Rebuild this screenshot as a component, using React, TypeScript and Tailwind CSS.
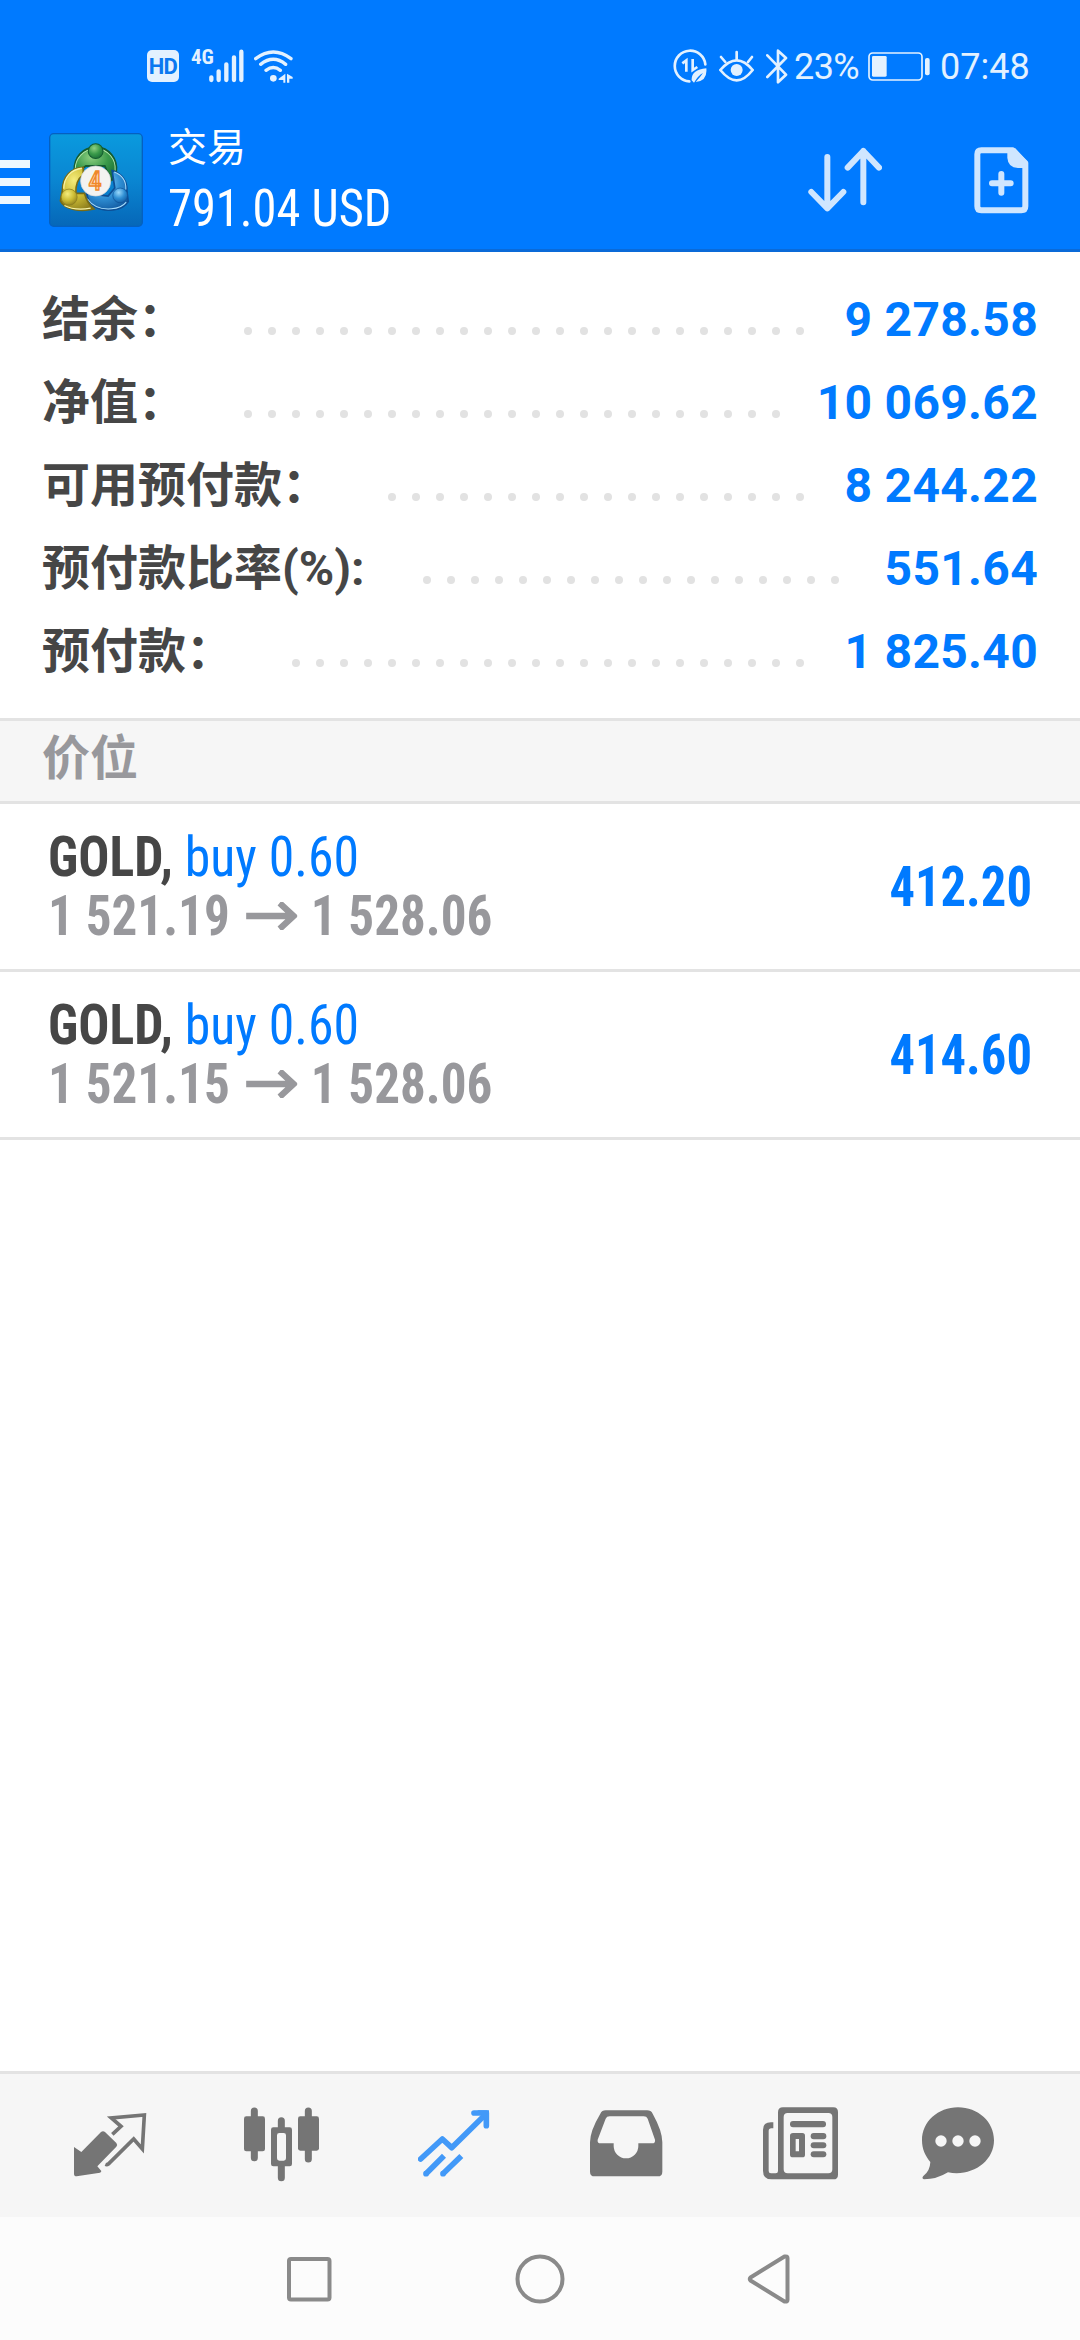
import type { ReactNode } from "react";

type SummaryRow = {
  label: string;
  value: string;
  dots: number;
};

type Position = {
  id: number;
  symbol: string;
  side: string;
  volume: string;
  open: string;
  current: string;
  profit: string;
};

const summary: SummaryRow[] = [
  { label: "结余：", value: "9 278.58", dots: 24 },
  { label: "净值：", value: "10 069.62", dots: 23 },
  { label: "可用预付款：", value: "8 244.22", dots: 18 },
  { label: "预付款比率(%):", value: "551.64", dots: 18 },
  { label: "预付款：", value: "1 825.40", dots: 22 },
];

const positions: Position[] = [
  { id: 1, symbol: "GOLD,", side: "buy", volume: "0.60", open: "1 521.19", current: "1 528.06", profit: "412.20" },
  { id: 2, symbol: "GOLD,", side: "buy", volume: "0.60", open: "1 521.15", current: "1 528.06", profit: "414.60" },
];

function StatusBar() {
  return (
    <div className="flex h-[111px] items-center pt-[21px] pl-[147px] pr-[51px] text-[#e3f1ff]">
      <div className="flex size-8 items-center justify-center rounded-[5px] bg-[#e3f1ff] text-[22px] font-bold tracking-tight text-[#0a78f0]">
        HD
      </div>
      <span className="ml-3 -mt-[17px] w-[18px] text-[21px] font-bold leading-none [font-stretch:75%]">4G</span>
      <svg className="h-[34px] w-[35px]" viewBox="238 56 105 102" stroke="currentColor" strokeWidth="13" strokeLinecap="round">
        <path d="M245 141v8M267 123v26M290 102v47M313 81v68M335 64v85" />
      </svg>
      <svg className="ml-[10px] h-[34px] w-10" viewBox="372 56 120 102" fill="none" stroke="currentColor" strokeWidth="10" strokeLinecap="round">
        <path d="M377 85Q430 45 483 85M392 102Q430 72 467 102M408 120Q430 103 451 120" />
        <circle cx="430" cy="144" r="10" fill="currentColor" stroke="none" />
        <path d="M466 130v27h-6v-8h-14v-4zM471 130l17 10v5h-10v12h-7z" fill="currentColor" stroke="none" />
      </svg>
      <div className="ml-auto flex items-center text-[36px] leading-none">
        <svg className="h-[34px] w-[34px]" viewBox="37 58 102 102" fill="none" stroke="currentColor" strokeWidth="8">
          <path d="M86 155A46 46 0 1 1 134 104" strokeLinecap="round" />
          <path d="M65 101l12-9v34M96 88v33l14-9" />
          <path d="M93 152q-2-31 44-36q4 38-32 41q14-15 22-27q-15 8-27 29z" fill="currentColor" stroke="none" />
        </svg>
        <svg className="ml-3 h-[34px] w-[35px]" viewBox="175 58 105 102" fill="none" stroke="currentColor" strokeWidth="8" strokeLinecap="round">
          <path d="M179 121Q204 92 228 92T276 121Q252 152 228 152T179 121z" />
          <path d="M228 67v22M181 82l13 15M274 82l-12 15" />
          <circle cx="228" cy="121" r="18" fill="currentColor" stroke="none" />
        </svg>
        <svg className="ml-3 h-[35px] w-[22px]" viewBox="317 57 66 105" fill="none" stroke="currentColor" strokeWidth="8" strokeLinejoin="round" strokeLinecap="round">
          <path d="M321 76l56 58l-24 23V62l24 22l-56 57" />
        </svg>
        <span className="mt-[2px] ml-[6px] w-[66px] tracking-[-0.6px]">23%</span>
        <svg className="ml-2 h-[29px] w-[62px]" viewBox="625 66 186 87" fill="none" stroke="currentColor" strokeWidth="5">
          <rect x="628" y="69" width="159" height="81" rx="11" />
          <rect x="637" y="78" width="44" height="62" rx="4" fill="currentColor" stroke="none" />
          <rect x="796" y="84" width="14" height="52" rx="6" fill="currentColor" stroke="none" />
        </svg>
        <span className="mt-[2px] ml-[10px] w-[89px]">07:48</span>
      </div>
    </div>
  );
}

function AppLogo() {
  return (
    <svg className="size-[94px]" viewBox="10 10 280 280" fill="none">
      <defs>
        <linearGradient id="logo-bg" x1="0" y1="0" x2="0" y2="1">
          <stop offset="0" stopColor="#0a9ade" />
          <stop offset="0.5" stopColor="#0a86d2" />
          <stop offset="1" stopColor="#0667b8" />
        </linearGradient>
        <radialGradient id="logo-green" cx="0.4" cy="0.3" r="0.8">
          <stop offset="0" stopColor="#8fd082" />
          <stop offset="0.5" stopColor="#3a9a4a" />
          <stop offset="1" stopColor="#146834" />
        </radialGradient>
        <radialGradient id="logo-yellow" cx="0.4" cy="0.3" r="0.8">
          <stop offset="0" stopColor="#f5ec7c" />
          <stop offset="0.5" stopColor="#cdbd35" />
          <stop offset="1" stopColor="#85761a" />
        </radialGradient>
        <radialGradient id="logo-blue" cx="0.4" cy="0.3" r="0.8">
          <stop offset="0" stopColor="#9ad8fb" />
          <stop offset="0.5" stopColor="#2f8fd4" />
          <stop offset="1" stopColor="#0d5198" />
        </radialGradient>
      </defs>
      <rect x="12" y="12" width="276" height="276" rx="12" fill="url(#logo-bg)" stroke="#0560c0" strokeWidth="4" />
      <path d="M86 122C84 84 108 54 150 52C190 54 214 88 210 124Q208 146 194 152L176 108H120L100 122z" fill="url(#logo-green)" stroke="#145c30" strokeWidth="6" />
      <path d="M88 118C88 86 112 58 150 56C186 58 210 88 207 122" stroke="#b4e6aa" strokeWidth="3" />
      <path d="M198 122C226 130 244 152 242 184L246 214C228 244 176 246 146 230Q126 216 122 190L186 198L206 174z" fill="url(#logo-blue)" stroke="#0d4f96" strokeWidth="5" />
      <path d="M204 126C226 134 240 152 239 178M124 206Q148 240 196 236Q226 234 240 216" stroke="#a9defc" strokeWidth="3" />
      <path d="M112 112C74 114 50 142 50 180L44 212C56 238 104 246 144 236Q124 220 116 190H90Q88 152 112 134z" fill="url(#logo-yellow)" stroke="#7a6c14" strokeWidth="5" />
      <path d="M108 115C76 118 54 142 54 176M56 226Q86 242 134 234" stroke="#f8f3a6" strokeWidth="4" />
      <circle cx="149" cy="64" r="22" fill="url(#logo-green)" stroke="#145c30" strokeWidth="3" />
      <circle cx="70" cy="201" r="24" fill="url(#logo-yellow)" stroke="#85781c" strokeWidth="2" />
      <circle cx="222" cy="196" r="22" fill="url(#logo-blue)" stroke="#0d4f96" strokeWidth="2" />
      <circle cx="149" cy="153" r="45" fill="#f3f3f1" stroke="#cfd4d6" strokeWidth="2" />
      <text x="147" y="180" textAnchor="middle" className="text-[78px] font-medium [font-stretch:85%]" fill="#fcd9ae" stroke="#f0872a" strokeWidth="4">
        4
      </text>
    </svg>
  );
}

function Header() {
  return (
    <header className="flex h-[252px] flex-col border-b-[3px] border-[#0a6ad8] bg-[#007aff]">
      <StatusBar />
      <div className="flex flex-1 items-center pr-[51px]">
        <div className="mt-1 flex w-[30px] flex-col gap-[10px]">
          <span className="h-2 bg-[#eef8ff]" />
          <span className="h-2 bg-[#eef8ff]" />
          <span className="h-2 bg-[#eef8ff]" />
        </div>
        <div className="ml-[19px]">
          <AppLogo />
        </div>
        <div className="ml-[25px] flex flex-col self-start pt-[14px] text-white">
          <span className="text-[39px] leading-[47px]">交易</span>
          <span className="origin-left scale-x-[0.95] text-[51px] leading-[73px] whitespace-nowrap [font-stretch:75%]">791.04 USD</span>
        </div>
        <svg className="ml-auto h-[66px] w-[74px]" viewBox="86 80 222 198" fill="none" stroke="#cfe6ff" strokeWidth="18" strokeLinecap="round" strokeLinejoin="round">
          <path d="M144 110v154M96 215l48 49l48-49M252 246V92M205 142l47-50l47 50" />
        </svg>
        <svg className="ml-[92px] h-[67px] w-[55px]" viewBox="584 80 165 201" fill="none" stroke="#cfe6ff" strokeWidth="18">
          <path d="M606 90H700L738 128V258Q738 270 726 270H606Q594 270 594 258V102Q594 90 606 90z" strokeLinejoin="round" />
          <path d="M684 90V112Q686 142 716 143H746V126L708 84z" fill="#cfe6ff" stroke="none" />
          <path d="M666 161v56M638 189h56" strokeLinecap="round" />
        </svg>
      </div>
    </header>
  );
}

function Leader({ count }: { count: number }) {
  return (
    <div className="ml-[58px] flex gap-4 pt-[23px]">
      {Array.from({ length: count }, (_, i) => (
        <span key={i} className="size-2 rounded-full bg-[#e2e2e2]" />
      ))}
    </div>
  );
}

function Summary() {
  return (
    <section className="border-b-[3px] border-[#e3e3e3] pt-[26px] pr-[42px] pb-[25px] pl-[42px]">
      {summary.map((row) => (
        <div key={row.label} className="flex h-[83px] items-center text-[48px] leading-[83px] font-bold">
          <span className="whitespace-nowrap text-[#464646]">{row.label}</span>
          <Leader count={row.dots} />
          <span className="ml-auto tracking-[0.3px] whitespace-nowrap text-[#007aff]">{row.value}</span>
        </div>
      ))}
    </section>
  );
}

function PositionRow({ item }: { item: Position }) {
  return (
    <li className="flex h-[168px] items-center justify-between border-b-[3px] border-[#e3e3e3] pr-12 pl-12 text-[55px] leading-[59px] [font-stretch:75%]">
      <div>
        <div className="flex origin-left scale-x-[0.94] whitespace-pre">
          <span className="font-bold text-[#464646]">{item.symbol}</span>
          <span className="text-[#007aff]">
            {" "}
            {item.side} {item.volume}
          </span>
        </div>
        <div className="flex origin-left scale-x-[0.93] items-center font-bold whitespace-nowrap text-[#98989c]">
          <span>{item.open}</span>
          <svg className="mr-[14px] ml-[18px] h-7 w-[55px]" viewBox="0 0 55 28" fill="none" stroke="currentColor" strokeWidth="6.5">
            <path d="M0 14H50M36 1l15 13l-15 13" />
          </svg>
          <span>{item.current}</span>
        </div>
      </div>
      <span className="mt-[2px] origin-right scale-x-[0.92] font-bold text-[#007aff]">{item.profit}</span>
    </li>
  );
}

function TabIcon({ x, width = 228, children }: { x: number; width?: number; children: ReactNode }) {
  return (
    <svg className="h-20" viewBox={`${x} 137 ${width} 240`} style={{ width: width / 3 }} fill="#757575" stroke="none">
      {children}
    </svg>
  );
}

function TabBar() {
  return (
    <nav className="grid h-[146px] grid-cols-[170px_174px_172px_173px_159px_auto] items-center border-t-[3px] border-[#e3e3e3] bg-[#f6f6f6] pl-[74px]">
      {/* quotes */}
      <TabIcon x={102}>
        <path d="M102 260L124 275L183 215Q189 210 195 215L229 248Q234 254 229 259L172 318L184 332Q184 336 180 337L110 348Q102 348 102 340z" />
        <path d="M217 222L243 198L214 173L313 164L307 266L281 236L205 311Q201 314 196 312" fill="none" stroke="#757575" strokeWidth="11" />
      </TabIcon>
      {/* charts */}
      <TabIcon x={612}>
        <path d="M643 152v140M805 152v144M724 181v26M724 315v37" stroke="#757575" strokeWidth="21" strokeLinecap="round" />
        <rect x="612" y="168" width="63" height="105" rx="7" />
        <rect x="774" y="168" width="63" height="103" rx="7" />
        <path fillRule="evenodd" d="M700 201h49q7 0 7 7v103q0 7-7 7h-49q-7 0-7-7V208q0-7 7-7zM718 218q-7 0-7 7v69q0 7 7 7h13q7 0 7-7v-69q0-7-7-7z" />
      </TabIcon>
      {/* trade */}
      <TabIcon x={1134}>
        <g fill="none" stroke="#4299f8" strokeLinejoin="round" strokeWidth="17">
          <path d="M1142 296L1207 236L1235 262L1334 165" strokeLinecap="round" />
          <path d="M1302 158h37v38" strokeLinecap="round" />
          <path d="M1158 340L1212 286M1209 340L1264 287" />
        </g>
        <circle cx="1158" cy="340" r="8.5" fill="#4299f8" />
        <circle cx="1209" cy="340" r="8.5" fill="#4299f8" />
        <path d="M1312 150h35v36z" fill="#4299f8" />
      </TabIcon>
      {/* history */}
      <TabIcon x={91}>
        <path fillRule="evenodd" d="M138 150H262Q274 150 279 160Q308 212 308 246V334Q308 348 294 348H105Q91 348 91 334V246Q91 212 122 160Q127 150 138 150zM150 168Q141 168 138 175L114 238Q112 249 123 249H162V257A37 37 0 0 0 236 257V249H277Q288 249 286 238L264 175Q261 168 252 168z" />
      </TabIcon>
      {/* news */}
      <TabIcon x={608}>
        <path fillRule="evenodd" d="M668 141H819Q833 141 833 155V343Q833 357 819 357H634Q608 357 608 331V208Q608 186 632 186H639V204H633Q625 204 625 212V332Q625 339 632 339H646Q653 339 653 332V156Q653 141 668 141zM682 158Q670 158 670 170V327Q670 339 682 339H804Q816 339 816 327V170Q816 158 804 158z" />
        <rect x="689" y="182" width="108" height="19" rx="9" />
        <path fillRule="evenodd" d="M698 218h28q8 0 8 8v57q0 8-8 8h-28q-9 0-9-8v-57q0-8 9-8zM706 236v37h10v-37z" />
        <rect x="751" y="218" width="47" height="19" rx="9" />
        <rect x="751" y="246" width="47" height="18" rx="9" />
        <rect x="751" y="273" width="47" height="18" rx="9" />
      </TabIcon>
      {/* messages */}
      <TabIcon x={1086}>
        <path d="M1194 141C1254 141 1302 184 1302 240C1302 304 1236 350 1164 336Q1130 357 1092 357Q1084 354 1090 347Q1110 332 1111 305C1096 288 1086 266 1086 240C1086 184 1134 141 1194 141z" />
        <g fill="#f6f6f6">
          <circle cx="1143" cy="242" r="17" />
          <circle cx="1194" cy="242" r="17" />
          <circle cx="1245" cy="242" r="17" />
        </g>
      </TabIcon>
    </nav>
  );
}

function SystemNav() {
  return (
    <div className="flex h-[123px] items-center bg-[#fcfcfc] pl-[286px]">
      <svg className="size-[46px]" viewBox="0 0 46 46" fill="none" stroke="#8a8a8a" strokeWidth="4">
        <rect x="3" y="3" width="40.5" height="40.5" rx="2" />
      </svg>
      <svg className="ml-[183px] size-[50px]" viewBox="0 0 50 50" fill="none" stroke="#8a8a8a" strokeWidth="4">
        <circle cx="25" cy="25" r="22.5" />
      </svg>
      <svg className="ml-[182px] h-[50px] w-11" viewBox="0 0 44 50" fill="none" stroke="#8a8a8a" strokeWidth="4" strokeLinejoin="round">
        <path d="M3.5 23.5Q2 25 3.5 26.5L37.5 47.5Q40.5 48 40.5 46V4Q40.5 2 37.5 2.5z" />
      </svg>
    </div>
  );
}

export default function App() {
  return (
    <div className="flex h-[2340px] w-[1080px] flex-col overflow-hidden bg-white font-['Roboto','Noto_Sans_CJK_SC',sans-serif]">
      <Header />
      <Summary />
      <h2 className="h-[83px] border-b-[3px] border-[#e3e3e3] bg-[#f6f6f6] pl-[42px] text-[48px] leading-[76px] font-bold text-[#98989c]">
        价位
      </h2>
      <ul className="flex-1">
        {positions.map((item) => (
          <PositionRow key={item.id} item={item} />
        ))}
      </ul>
      <TabBar />
      <SystemNav />
    </div>
  );
}
